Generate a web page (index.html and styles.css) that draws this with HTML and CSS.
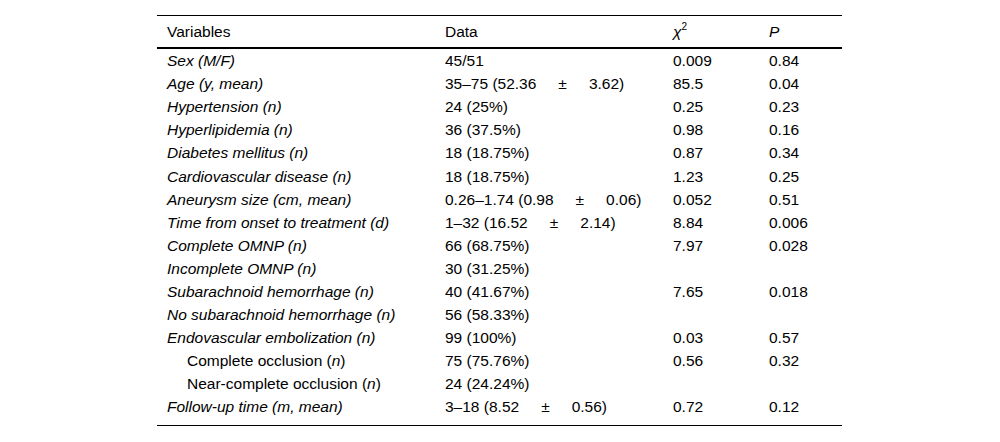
FILE: index.html
```html
<!DOCTYPE html>
<html lang="en">
<head>
<meta charset="utf-8">
<title>Table</title>
<link rel="stylesheet" href="styles.css">
</head>
<body>
<div class="wrap">
<table class="tbl">
<colgroup>
<col class="c1"><col class="c2"><col class="c3"><col class="c4">
</colgroup>
<thead>
<tr><th>Variables</th><th>Data</th><th><i>χ</i><sup>2</sup></th><th><i>P</i></th></tr>
</thead>
<tbody>
<tr><td><i>Sex (M/F)</i></td><td>45/51</td><td>0.009</td><td>0.84</td></tr>
<tr><td><i>Age (y, mean)</i></td><td>35–75 (52.36<span class="pm">±</span>3.62)</td><td>85.5</td><td>0.04</td></tr>
<tr><td><i>Hypertension (n)</i></td><td>24 (25%)</td><td>0.25</td><td>0.23</td></tr>
<tr><td><i>Hyperlipidemia (n)</i></td><td>36 (37.5%)</td><td>0.98</td><td>0.16</td></tr>
<tr><td><i>Diabetes mellitus (n)</i></td><td>18 (18.75%)</td><td>0.87</td><td>0.34</td></tr>
<tr><td><i>Cardiovascular disease (n)</i></td><td>18 (18.75%)</td><td>1.23</td><td>0.25</td></tr>
<tr><td><i>Aneurysm size (cm, mean)</i></td><td>0.26–1.74 (0.98<span class="pm">±</span>0.06)</td><td>0.052</td><td>0.51</td></tr>
<tr><td><i>Time from onset to treatment (d)</i></td><td>1–32 (16.52<span class="pm">±</span>2.14)</td><td>8.84</td><td>0.006</td></tr>
<tr><td><i>Complete OMNP (n)</i></td><td>66 (68.75%)</td><td>7.97</td><td>0.028</td></tr>
<tr><td><i>Incomplete OMNP (n)</i></td><td>30 (31.25%)</td><td></td><td></td></tr>
<tr><td><i>Subarachnoid hemorrhage (n)</i></td><td>40 (41.67%)</td><td>7.65</td><td>0.018</td></tr>
<tr><td><i>No subarachnoid hemorrhage (n)</i></td><td>56 (58.33%)</td><td></td><td></td></tr>
<tr><td><i>Endovascular embolization (n)</i></td><td>99 (100%)</td><td>0.03</td><td>0.57</td></tr>
<tr><td class="sub">Complete occlusion (<i>n</i>)</td><td>75 (75.76%)</td><td>0.56</td><td>0.32</td></tr>
<tr><td class="sub">Near-complete occlusion (<i>n</i>)</td><td>24 (24.24%)</td><td></td><td></td></tr>
<tr class="last"><td><i>Follow-up time (m, mean)</i></td><td>3–18 (8.52<span class="pm">±</span>0.56)</td><td>0.72</td><td>0.12</td></tr>
</tbody>
</table>
</div>
</body>
</html>
```
FILE: styles.css
```css
html, body {
  margin: 0;
  padding: 0;
  background: #fff;
}
body {
  font-family: "Liberation Sans", Arial, sans-serif;
  font-size: 15.5px;
  color: #000;
}
.wrap {
  padding-top: 15px;
  display: flex;
  justify-content: center;
}
.tbl {
  width: 685px;
  border-collapse: collapse;
  table-layout: fixed;
  border-top: 1px solid #000;
  border-bottom: 1px solid #000;
  margin-left: -1px;
}
.c1 { width: 278px; }
.c2 { width: 228px; }
.c3 { width: 96px; }
.c4 { width: 83px; }
.tbl th {
  font-weight: normal;
  text-align: left;
  padding: 7px 10px;
  line-height: 17px;
  border-bottom: 2px solid #000;
  vertical-align: top;
}
.tbl th sup {
  font-size: 10px;
  line-height: 0;
  position: relative;
  top: -1px;
}
.tbl td {
  padding: 3.05px 10px;
  line-height: 17px;
  white-space: nowrap;
  vertical-align: top;
}
.tbl td.sub {
  padding-left: 30px;
}
.tbl tr.last td {
  padding-bottom: 10px;
}
.pm {
  margin: 0 22px;
}
```
